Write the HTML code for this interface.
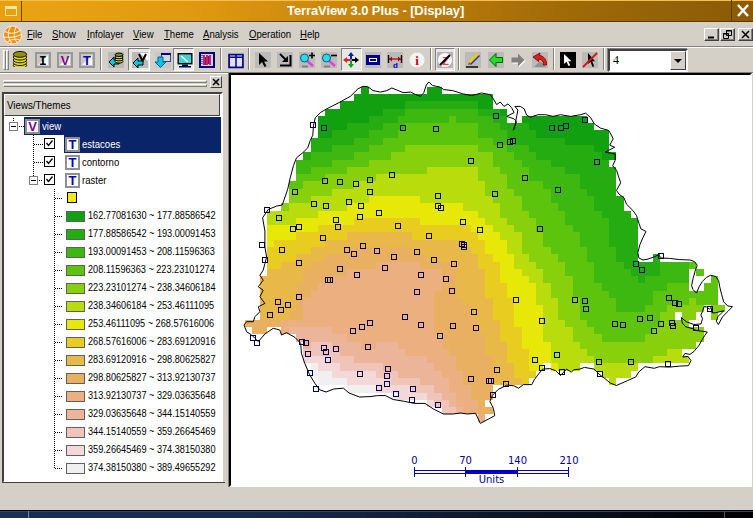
<!DOCTYPE html>
<html><head><meta charset="utf-8"><title>TerraView 3.0 Plus - [Display]</title>
<style>*{margin:0;padding:0;box-sizing:border-box}
html,body{width:753px;height:518px;overflow:hidden}
body{position:relative;background:#d4d0c8;font-family:"Liberation Sans",sans-serif;font-size:11px;color:#000}
#title{position:absolute;left:0;top:0;width:753px;height:22px;background:linear-gradient(90deg,#eaa412 0,#e09a10 25%,#c4820c 50%,#a06a08 75%,#8a5a06 100%);border-top:1px solid #f2c050;border-bottom:1px solid #5a3a00}
#tbtn{position:absolute;left:0;top:0;width:22px;height:20px;border-right:1px solid #6a4400;background:#e8a010}
#tbtn i{position:absolute;left:5px;top:5px;width:12px;height:10px;border:1px solid #ffe9a0;border-top-width:3px}
#ttext{position:absolute;left:287px;top:2px;white-space:nowrap;color:#fff;font-weight:bold;font-size:13px;line-height:16px;letter-spacing:-0.1px}
#tclose{position:absolute;left:731px;top:-1px;width:22px;height:21px;border-left:1px solid #5a3a00}
#menubar{position:absolute;left:0;top:22px;width:753px;height:52px}
.mi{position:absolute;top:5px;font-size:11px;line-height:14px;white-space:nowrap;transform-origin:0 0;transform:scaleX(.87)}
.mi u{text-decoration:underline}
.mb{position:absolute;top:6px;width:15px;height:13px;background:#d4d0c8;border:1px solid;border-color:#fff #404040 #404040 #fff;box-shadow:inset -1px -1px 0 #808080}
.sep{position:absolute;top:26px;width:2px;height:22px;border-left:1px solid #808080;border-right:1px solid #fff}
.tb{position:absolute;top:30px;width:16px;height:16px}
.prs{position:absolute;top:26px;height:23px;background:#e9e7e3;border:1px solid;border-color:#808080 #fff #fff #808080}
#combo{position:absolute;left:608px;top:27px;width:80px;height:23px;background:#fff;border:2px solid;border-color:#404040 #fff #fff #404040;box-shadow:-1px -1px 0 #808080}
#combo span{position:absolute;left:3px;top:2px;font-family:"Liberation Serif",serif;font-size:12px;line-height:15px}
#combo i{position:absolute;right:0;top:0;width:16px;height:19px;background:#d4d0c8;border:1px solid;border-color:#fff #404040 #404040 #fff}
#combo i:after{content:"";position:absolute;left:3px;top:7px;border:4px solid transparent;border-top:4px solid #000;border-bottom:0}
#dock{position:absolute;left:0;top:0;width:228px;height:487px}
.grip{position:absolute;left:3px;width:204px;height:3px;border:1px solid;border-color:#fff #808080 #808080 #fff}
#dclose{position:absolute;left:210px;top:76px;width:12px;height:12px;border:1px solid;border-color:#fff #404040 #404040 #fff;line-height:0}
#dclose svg{position:absolute;left:-1px;top:-1px}
#vthead{position:absolute;left:4px;top:94px;width:216px;height:22px;background:#d4d0c8;border:1px solid;border-color:#fff #404040 #404040 #fff}
#vthead span{position:absolute;left:2px;top:3px;font-size:11px;line-height:14px;white-space:nowrap;transform-origin:0 0;transform:scaleX(.885)}
#treebox{position:absolute;left:2px;top:92px;width:221px;height:391px;border:2px solid;border-color:#404040 #fff #fff #404040;background:#fff;z-index:-1}
#treebox .sel{position:absolute;height:18px;background:#0a246a;margin-top:23px}
#treeitems{position:absolute;left:0;top:0}
.tt{position:absolute;font-size:11px;line-height:14px;white-space:nowrap;transform-origin:0 0;transform:scaleX(.87)}
.tt.w{color:#fff}
.lt{position:absolute;left:88px;font-size:10px;line-height:14px;white-space:nowrap;transform-origin:0 0;transform:scaleX(.915)}
.sw{position:absolute;left:66px;width:19px;height:11px;border:1px solid #606060}
.ysq{position:absolute;width:10px;height:11px;background:#ffe800;border:1px solid #000}
.vd{position:absolute;width:1px;background:repeating-linear-gradient(180deg,#000 0,#000 1px,transparent 1px,transparent 2px)}
.hd{position:absolute;height:1px;background:repeating-linear-gradient(90deg,#000 0,#000 1px,transparent 1px,transparent 2px)}
.pm{position:absolute;width:9px;height:9px;border:1px solid #808080;background:#fff}
.pm i{position:absolute;left:1px;top:3px;width:5px;height:1px;background:#000}
.cb{position:absolute;width:11px;height:11px;border:1px solid #000;background:#fff;line-height:0}
.vicon,.ticon{position:absolute;width:15px;height:15px;background:#fff;border:2px solid #909090;text-align:center;line-height:11px}
.vicon b{color:#800090;font-size:13px;line-height:11px;font-weight:bold;display:block;margin-left:-2px;width:15px}
.ticon b{color:#0000c0;font-size:13px;line-height:11px;font-weight:bold;display:block;margin-left:-2px;width:15px}
#canvas{position:absolute;left:229px;top:73px;width:523px;height:414px;background:#fff;border:2px solid;border-color:#000 #fff #fff #000;overflow:hidden;box-shadow:-1px 0 0 #808080}
#task{position:absolute;left:0;top:510px;width:753px;height:8px;background:linear-gradient(90deg,#16305a 0,#14284c 40%,#0a1428 70%,#000 100%);border-top:1px solid #000;box-shadow:inset 0 1px 0 #2c4470}
#task i{position:absolute;left:28px;top:0;width:1px;height:8px;background:#7088b0}

.hl{position:absolute;left:0;width:753px;height:2px;border-top:1px solid #808080;border-bottom:1px solid #fff}
.th{position:absolute;top:28px;width:3px;height:20px;border:1px solid;border-color:#fff #808080 #808080 #fff}
#task b{position:absolute;left:724px;top:0;width:1px;height:8px;background:#505868}
#tbot{position:absolute;left:2px;top:482px;width:223px;height:1px;background:#404040}
</style></head><body>
<div id="title"><div id="tbtn"><i></i></div><div id="ttext">TerraView 3.0 Plus - [Display]</div><div id="tclose"><svg width="22" height="22" viewBox="0 0 22 22"><path d="M6 5 L16 16 M16 5 L6 16" stroke="#fff" stroke-width="2.4" fill="none"/></svg></div></div>
<div id="menubar">
<svg style="position:absolute;left:2px;top:3px" width="21" height="20" viewBox="0 0 21 20"><circle cx="10.5" cy="10" r="9" fill="#f68a12" stroke="#fff0c8" stroke-width="1"/><g fill="none" stroke="#fff0c8" stroke-width="1.1"><path d="M3 6.5 C7 9 14 9 18 5.5"/><path d="M2 12 C7 12.5 14 12.5 19 9.5"/><path d="M5.5 16.5 C9 14.5 14 14 17.5 14.5"/><path d="M8.5 1.5 C5 7 6 14 10 18.5"/><path d="M14 2 C11 8 12 14 15 17.5"/></g></svg>
<div class="mi" style="left:27px"><u>F</u>ile</div>
<div class="mi" style="left:52px"><u>S</u>how</div>
<div class="mi" style="left:87px"><u>I</u>nfolayer</div>
<div class="mi" style="left:133px"><u>V</u>iew</div>
<div class="mi" style="left:164px"><u>T</u>heme</div>
<div class="mi" style="left:203px"><u>A</u>nalysis</div>
<div class="mi" style="left:249px"><u>O</u>peration</div>
<div class="mi" style="left:300px"><u>H</u>elp</div>
<div class="mb" style="left:704px"><svg width="13" height="11"><path d="M3 8.5 H9" stroke="#000" stroke-width="2"/></svg></div>
<div class="mb" style="left:720px"><svg width="13" height="11"><path d="M5.5 1.5 H10.5 V6.5 H5.5 Z M2.5 4.5 H7.5 V9.5 H2.5 Z" stroke="#000" fill="#d4d0c8" stroke-width="1"/><path d="M5 2 H11 M2 5 H8" stroke="#000"/></svg></div>
<div class="mb" style="left:738px"><svg width="13" height="11"><path d="M3 2 L10 9 M10 2 L3 9" stroke="#000" stroke-width="1.5"/></svg></div>
<div class="hl" style="top:24px"></div><div class="hl" style="top:50px"></div><div class="th" style="left:3px"></div><div class="th" style="left:6px"></div>
<div class="sep" style="left:100px"></div><div class="sep" style="left:220px"></div><div class="sep" style="left:248px"></div><div class="sep" style="left:430px"></div><div class="sep" style="left:458px"></div><div class="sep" style="left:553px"></div><div class="sep" style="left:603px"></div>
<div class="prs" style="left:128px;width:22px"></div><div class="prs" style="left:173px;width:21px"></div><div class="prs" style="left:341px;width:21px"></div><div class="prs" style="left:435px;width:20px"></div>
<svg class="tb" style="left:12px;top:29px" width="17" height="18" viewBox="0 0 17 18"><ellipse cx="8.5" cy="16.2" rx="7.5" ry="3.3" fill="#e0d828" stroke="#000" stroke-width="1"/><ellipse cx="8.5" cy="13.100000000000001" rx="7.5" ry="3.3" fill="#e0d828" stroke="#000" stroke-width="1"/><ellipse cx="8.5" cy="10.0" rx="7.5" ry="3.3" fill="#e0d828" stroke="#000" stroke-width="1"/><ellipse cx="8.5" cy="6.9" rx="7.5" ry="3.3" fill="#e0d828" stroke="#000" stroke-width="1"/><ellipse cx="8.5" cy="3.8" rx="7.5" ry="3.3" fill="#909010" stroke="#000" stroke-width="1"/></svg>
<svg class="tb" style="left:35px;top:30px" width="16" height="16" viewBox="0 0 16 16"><rect x="1" y="1" width="14" height="14" fill="#c8c8c8" stroke="#989898" stroke-width="2"/><path d="M3 13 L13 3 L13 13 Z" fill="#fff"/><text x="8" y="13" font-family="Liberation Mono,monospace" font-weight="bold" font-size="13" fill="#000" text-anchor="middle">I</text></svg>
<svg class="tb" style="left:57px;top:30px" width="16" height="16" viewBox="0 0 16 16"><rect x="1" y="1" width="14" height="14" fill="#c8c8c8" stroke="#989898" stroke-width="2"/><path d="M3 13 L13 3 L13 13 Z" fill="#fff"/><text x="8" y="13" font-family="Liberation Sans,sans-serif" font-weight="bold" font-size="13" fill="#800090" text-anchor="middle">V</text></svg>
<svg class="tb" style="left:79px;top:30px" width="16" height="16" viewBox="0 0 16 16"><rect x="1" y="1" width="14" height="14" fill="#c8c8c8" stroke="#989898" stroke-width="2"/><path d="M3 13 L13 3 L13 13 Z" fill="#fff"/><text x="8" y="13" font-family="Liberation Sans,sans-serif" font-weight="bold" font-size="13" fill="#0000c8" text-anchor="middle">T</text></svg>
<svg class="tb" style="left:108px;top:30px" width="16" height="16" viewBox="0 0 16 16"><rect width="16" height="16" fill="#bababa"/><path d="M1 10 L6 5 V8 H11 V12 H6 V15 Z" fill="#00c8d8" stroke="#000" stroke-width="1"/><ellipse cx="11.0" cy="9.36" rx="4.0" ry="1.76" fill="#e0d828" stroke="#000" stroke-width="1"/><ellipse cx="11.0" cy="7.16" rx="4.0" ry="1.76" fill="#e0d828" stroke="#000" stroke-width="1"/><ellipse cx="11.0" cy="4.96" rx="4.0" ry="1.76" fill="#e0d828" stroke="#000" stroke-width="1"/><ellipse cx="11.0" cy="2.76" rx="4.0" ry="1.76" fill="#909010" stroke="#000" stroke-width="1"/></svg>
<svg class="tb" style="left:132px;top:30px" width="16" height="16" viewBox="0 0 16 16"><rect width="16" height="16" fill="#bababa"/><path d="M8 1 H16 V9 Z" fill="#fff"/><path d="M7 2 L10.5 9 L14 2" stroke="#000" stroke-width="2" fill="none"/><path d="M1 11 L6 6 V9 H11 V13 H6 V16 Z" fill="#00c8d8" stroke="#000" stroke-width="1"/></svg>
<svg class="tb" style="left:155px;top:30px" width="16" height="16" viewBox="0 0 16 16"><rect width="16" height="16" fill="#c8c8c8"/><rect x="6.5" y="1.5" width="9" height="8" fill="#d8d8d8" stroke="#404080"/><rect x="6" y="1" width="10" height="2" fill="#000080"/><path d="M3 5 H8 V10 H11 L5.5 15.5 L0 10 H3 Z" fill="#00c8d8" stroke="#0060a0" stroke-width="1"/></svg>
<svg class="tb" style="left:177px;top:30px" width="16" height="16" viewBox="0 0 16 16"><rect x="1.2" y="1.7" width="13.6" height="10" fill="#40d0d8" stroke="#000" stroke-width="1.4"/><path d="M4 4 L11 10" stroke="#fff" stroke-width="1.5"/><rect x="5" y="12.5" width="6" height="1.5" fill="#000"/><rect x="2" y="14" width="12" height="1.5" fill="#000080"/></svg>
<svg class="tb" style="left:199px;top:30px" width="16" height="16" viewBox="0 0 16 16"><rect x="1" y="1" width="14" height="14" fill="#d0d0e0" stroke="#000080" stroke-width="2"/><path d="M5 3 V13 M8 3 V13 M11 3 V13" stroke="#c00030" stroke-width="1.6"/><path d="M6.5 5 V13 M9.5 4 V12" stroke="#8000c0" stroke-width="1"/><path d="M3 3 V13" stroke="#000080" stroke-dasharray="1 1"/></svg>
<svg class="tb" style="left:228px;top:31px" width="15" height="15" viewBox="0 0 15 15"><rect x="1" y="1.5" width="13" height="12" fill="#e0e0f0" stroke="#000090" stroke-width="1.6"/><path d="M7.5 1 V14 M1 4 H14" stroke="#000090" stroke-width="1.4"/></svg>
<svg class="tb" style="left:255px;top:30px" width="16" height="16" viewBox="0 0 16 16"><rect width="16" height="16" fill="#bababa"/><path d="M4 1 L4 13 L7 10 L9.5 15 L11.5 14 L9 9.5 L13 9.5 Z" fill="#000"/></svg>
<svg class="tb" style="left:277px;top:30px" width="16" height="16" viewBox="0 0 16 16"><rect width="16" height="16" fill="#bababa"/><path d="M3 2 L10 9" stroke="#000" stroke-width="2"/><path d="M11 4 V10 H5 Z" fill="#000"/><path d="M3 13.5 H13.5 V3" stroke="#000" stroke-width="2" fill="none"/></svg>
<svg class="tb" style="left:299px;top:30px" width="16" height="16" viewBox="0 0 16 16"><rect width="16" height="16" fill="#bababa"/><path d="M7 8 L14 14" stroke="#e040e0" stroke-width="2.4"/><path d="M3 14.5 H9" stroke="#808080" stroke-width="2"/><circle cx="5.5" cy="6" r="4" fill="#30d8e8" stroke="#006080" stroke-width="1"/><path d="M10 3.5 H16 M13 0.5 V6.5" stroke="#000" stroke-width="1.6"/></svg>
<svg class="tb" style="left:321px;top:30px" width="16" height="16" viewBox="0 0 16 16"><rect width="16" height="16" fill="#bababa"/><path d="M7 8 L14 14" stroke="#e040e0" stroke-width="2.4"/><path d="M3 14.5 H9" stroke="#808080" stroke-width="2"/><circle cx="5.5" cy="6" r="4" fill="#30d8e8" stroke="#006080" stroke-width="1"/><path d="M10 3.5 H16" stroke="#000" stroke-width="1.6"/></svg>
<svg class="tb" style="left:343px;top:30px" width="16" height="16" viewBox="0 0 16 16"><path d="M8 0 L11 4 H9 V7 H7 V4 H5 Z" fill="#0020c0"/><path d="M8 16 L5 12 H7 V9 H9 V12 H11 Z" fill="#10a020"/><path d="M0 8 L4 5 V7 H7 V9 H4 V11 Z" fill="#e02020"/><path d="M16 8 L12 11 V9 H9 V7 H12 V5 Z" fill="#000"/><rect x="7" y="7" width="2" height="2" fill="#808080"/></svg>
<svg class="tb" style="left:365px;top:30px" width="16" height="16" viewBox="0 0 16 16"><rect width="16" height="16" fill="#bababa"/><rect x="1" y="3" width="14" height="10" fill="#000090"/><rect x="4.5" y="6.5" width="7" height="3" fill="none" stroke="#fff" stroke-width="1"/></svg>
<svg class="tb" style="left:387px;top:30px" width="16" height="16" viewBox="0 0 16 16"><rect width="16" height="16" fill="#bababa"/><path d="M1.5 3 V11 M14.5 3 V11" stroke="#000" stroke-width="1.4"/><path d="M2 7 H14" stroke="#b00000" stroke-width="1.2"/><path d="M2 7 L5 4.5 V9.5 Z M14 7 L11 4.5 V9.5 Z" fill="#b00000"/><text x="6" y="15.5" font-size="8" font-weight="bold" fill="#0000d0" font-family="Liberation Sans,sans-serif">d</text></svg>
<svg class="tb" style="left:409px;top:30px" width="16" height="16" viewBox="0 0 16 16"><circle cx="8" cy="8" r="7.6" fill="#f4f4f4"/><text x="8" y="13" font-size="13" font-weight="bold" fill="#d00000" text-anchor="middle" font-family="Liberation Serif,serif">i</text></svg>
<svg class="tb" style="left:437px;top:30px" width="16" height="16" viewBox="0 0 16 16"><rect width="16" height="16" fill="#b4b4b4"/><circle cx="8" cy="8" r="7" fill="#f8f8f8"/><text x="8.5" y="12.5" font-size="11" font-weight="bold" fill="#e04040" text-anchor="middle" font-family="Liberation Sans,sans-serif">Z</text><path d="M3 13 L13 3" stroke="#000" stroke-width="2"/></svg>
<svg class="tb" style="left:465px;top:30px" width="16" height="16" viewBox="0 0 16 16"><rect width="16" height="16" fill="#bababa"/><path d="M4 11 L13 2" stroke="#e8d000" stroke-width="3"/><path d="M5.5 12.5 L14.5 3.5" stroke="#2030c0" stroke-width="1.4"/><path d="M3 13 L4 10 L6 12 Z" fill="#c04020"/><path d="M1 15 H13" stroke="#000" stroke-width="1.4"/></svg>
<svg class="tb" style="left:488px;top:30px" width="16" height="16" viewBox="0 0 16 16"><rect width="16" height="16" fill="#bababa"/><path d="M1.5 8 L8 1.5 V5.5 H14.5 V10.5 H8 V14.5 Z" fill="#20e020" stroke="#006000" stroke-width="1"/></svg>
<svg class="tb" style="left:510px;top:30px" width="16" height="16" viewBox="0 0 16 16"><path d="M15.5 9 L9 2.5 V6.5 H2.5 V11.5 H9 V15.5 Z" fill="#fff"/><path d="M14.5 8 L8 1.5 V5.5 H1.5 V10.5 H8 V14.5 Z" fill="#808080"/></svg>
<svg class="tb" style="left:532px;top:30px" width="16" height="16" viewBox="0 0 16 16"><rect width="16" height="16" fill="#bababa"/><path d="M2 15 L8 9 L14 15 Z" fill="#909090"/><path d="M1 5 L8 1 L7.5 3.5 C12 4 15 8 14.5 13 L11.5 13 C11.5 9.5 10 7.5 7 7 L6.5 9.5 Z" fill="#e02020" stroke="#700000" stroke-width=".8"/></svg>
<svg class="tb" style="left:560px;top:30px" width="16" height="16" viewBox="0 0 16 16"><rect width="16" height="16" fill="#000"/><path d="M4 2 L4 12 L6.5 9.8 L8.5 14 L10.2 13.2 L8.2 9.2 L11.5 9.2 Z" fill="#fff"/></svg>
<svg class="tb" style="left:582px;top:30px" width="16" height="16" viewBox="0 0 16 16"><rect width="16" height="16" fill="#bababa"/><path d="M6 1 L6 12 L8.5 9.8 L10.5 15 L12.2 14.2 L10.2 9.2 L13 9.2 Z" fill="#000"/><path d="M1 15 L15 1" stroke="#e01010" stroke-width="1.8"/></svg>
<div id="combo"><span>4</span><i></i></div>

</div>
<div id="dock">
 <div class="grip" style="top:80px"></div><div class="grip" style="top:84px"></div>
 <div id="dclose"><svg width="12" height="12" viewBox="0 0 12 12"><path d="M3 3 L9 9 M9 3 L3 9" stroke="#000" stroke-width="1.6"/></svg></div>
 <div id="vthead"><span>Views/Themes</span></div>
 <div id="treebox">
  <div class="sel" style="left:20px;top:0;width:197px"></div>
  <div class="sel" style="left:60px;top:18px;width:157px"></div>
 </div>
 <div id="treeitems">
  <div class="vd" style="left:13px;top:118px;height:4px"></div>
  <div class="pm" style="left:9px;top:122px"><i></i></div>
  <div class="hd" style="left:19px;top:126px;width:5px"></div>
  <div class="vicon" style="left:25px;top:119px"><b>V</b></div>
  <div class="tt w" style="left:42px;top:119px">view</div>
  <div class="vd" style="left:33px;top:135px;height:41px"></div>
  <div class="hd" style="left:34px;top:144px;width:9px"></div>
  <div class="hd" style="left:34px;top:162px;width:9px"></div>
  <div class="pm" style="left:29px;top:176px"><i></i></div>
  <div class="hd" style="left:39px;top:180px;width:4px"></div>
  <div class="cb" style="left:44px;top:138px"><svg width="9" height="9" viewBox="0 0 9 9"><path d="M1.5 4 L3.5 6.5 L7.5 1.5" stroke="#000" stroke-width="1.3" fill="none"/></svg></div>
  <div class="cb" style="left:44px;top:156px"><svg width="9" height="9" viewBox="0 0 9 9"><path d="M1.5 4 L3.5 6.5 L7.5 1.5" stroke="#000" stroke-width="1.3" fill="none"/></svg></div>
  <div class="cb" style="left:44px;top:174px"><svg width="9" height="9" viewBox="0 0 9 9"><path d="M1.5 4 L3.5 6.5 L7.5 1.5" stroke="#000" stroke-width="1.3" fill="none"/></svg></div>
  <div class="ticon" style="left:65px;top:137px"><b>T</b></div>
  <div class="ticon" style="left:65px;top:155px"><b>T</b></div>
  <div class="ticon" style="left:65px;top:173px"><b>T</b></div>
  <div class="tt w" style="left:82px;top:137px">estacoes</div>
  <div class="tt" style="left:82px;top:155px">contorno</div>
  <div class="tt" style="left:82px;top:173px">raster</div>
  <div class="vd" style="left:54px;top:189px;height:280px"></div>
  <div class="hd" style="left:55px;top:198px;width:7px"></div>
  <div class="ysq" style="left:67px;top:192px"></div>
  <div class="sw" style="top:211px;background:#10a010"></div><div class="lt" style="top:209px">162.77081630 ~ 177.88586542</div><div class="hd" style="left:55px;top:216px;width:7px"></div><div class="sw" style="top:229px;background:#24ac10"></div><div class="lt" style="top:227px">177.88586542 ~ 193.00091453</div><div class="hd" style="left:55px;top:234px;width:7px"></div><div class="sw" style="top:247px;background:#3cb810"></div><div class="lt" style="top:245px">193.00091453 ~ 208.11596363</div><div class="hd" style="left:55px;top:252px;width:7px"></div><div class="sw" style="top:265px;background:#5cc40c"></div><div class="lt" style="top:263px">208.11596363 ~ 223.23101274</div><div class="hd" style="left:55px;top:270px;width:7px"></div><div class="sw" style="top:283px;background:#88d00c"></div><div class="lt" style="top:281px">223.23101274 ~ 238.34606184</div><div class="hd" style="left:55px;top:288px;width:7px"></div><div class="sw" style="top:301px;background:#b8dc0c"></div><div class="lt" style="top:299px">238.34606184 ~ 253.46111095</div><div class="hd" style="left:55px;top:306px;width:7px"></div><div class="sw" style="top:319px;background:#e8e808"></div><div class="lt" style="top:317px">253.46111095 ~ 268.57616006</div><div class="hd" style="left:55px;top:324px;width:7px"></div><div class="sw" style="top:337px;background:#e8cc20"></div><div class="lt" style="top:335px">268.57616006 ~ 283.69120916</div><div class="hd" style="left:55px;top:342px;width:7px"></div><div class="sw" style="top:355px;background:#e8b848"></div><div class="lt" style="top:353px">283.69120916 ~ 298.80625827</div><div class="hd" style="left:55px;top:360px;width:7px"></div><div class="sw" style="top:373px;background:#e8b060"></div><div class="lt" style="top:371px">298.80625827 ~ 313.92130737</div><div class="hd" style="left:55px;top:378px;width:7px"></div><div class="sw" style="top:391px;background:#ecb080"></div><div class="lt" style="top:389px">313.92130737 ~ 329.03635648</div><div class="hd" style="left:55px;top:396px;width:7px"></div><div class="sw" style="top:409px;background:#ecb498"></div><div class="lt" style="top:407px">329.03635648 ~ 344.15140559</div><div class="hd" style="left:55px;top:414px;width:7px"></div><div class="sw" style="top:427px;background:#f0c4b8"></div><div class="lt" style="top:425px">344.15140559 ~ 359.26645469</div><div class="hd" style="left:55px;top:432px;width:7px"></div><div class="sw" style="top:445px;background:#f4d8d8"></div><div class="lt" style="top:443px">359.26645469 ~ 374.38150380</div><div class="hd" style="left:55px;top:450px;width:7px"></div><div class="sw" style="top:463px;background:#f0f0f0"></div><div class="lt" style="top:461px">374.38150380 ~ 389.49655292</div><div class="hd" style="left:55px;top:468px;width:7px"></div>
 </div>
</div>
<div id="canvas">
<svg width="520" height="411" viewBox="0 0 520 411" style="position:absolute;left:0;top:0"><g shape-rendering="crispEdges"><rect x="130" y="12" width="8" height="7" fill="#10a010"/><rect x="196" y="12" width="15" height="7" fill="#10a010"/><rect x="123" y="19" width="139" height="7" fill="#10a010"/><rect x="109" y="26" width="65" height="8" fill="#10a010"/><rect x="174" y="26" width="73" height="8" fill="#24ac10"/><rect x="247" y="26" width="15" height="8" fill="#10a010"/><rect x="94" y="34" width="58" height="7" fill="#10a010"/><rect x="152" y="34" width="22" height="7" fill="#24ac10"/><rect x="174" y="34" width="73" height="7" fill="#3cb810"/><rect x="247" y="34" width="22" height="7" fill="#24ac10"/><rect x="269" y="34" width="7" height="7" fill="#10a010"/><rect x="87" y="41" width="51" height="7" fill="#10a010"/><rect x="138" y="41" width="29" height="7" fill="#24ac10"/><rect x="167" y="41" width="51" height="7" fill="#3cb810"/><rect x="218" y="41" width="7" height="7" fill="#5cc40c"/><rect x="225" y="41" width="37" height="7" fill="#3cb810"/><rect x="262" y="41" width="14" height="7" fill="#24ac10"/><rect x="291" y="41" width="65" height="7" fill="#10a010"/><rect x="87" y="48" width="29" height="7" fill="#10a010"/><rect x="116" y="48" width="36" height="7" fill="#24ac10"/><rect x="152" y="48" width="22" height="7" fill="#3cb810"/><rect x="174" y="48" width="73" height="7" fill="#5cc40c"/><rect x="247" y="48" width="22" height="7" fill="#3cb810"/><rect x="269" y="48" width="29" height="7" fill="#24ac10"/><rect x="298" y="48" width="65" height="7" fill="#10a010"/><rect x="87" y="55" width="14" height="8" fill="#10a010"/><rect x="101" y="55" width="37" height="8" fill="#24ac10"/><rect x="138" y="55" width="29" height="8" fill="#3cb810"/><rect x="167" y="55" width="80" height="8" fill="#5cc40c"/><rect x="247" y="55" width="29" height="8" fill="#3cb810"/><rect x="276" y="55" width="29" height="8" fill="#24ac10"/><rect x="305" y="55" width="73" height="8" fill="#10a010"/><rect x="80" y="63" width="43" height="7" fill="#24ac10"/><rect x="123" y="63" width="29" height="7" fill="#3cb810"/><rect x="152" y="63" width="110" height="7" fill="#5cc40c"/><rect x="262" y="63" width="21" height="7" fill="#3cb810"/><rect x="283" y="63" width="51" height="7" fill="#24ac10"/><rect x="334" y="63" width="44" height="7" fill="#10a010"/><rect x="80" y="70" width="21" height="7" fill="#24ac10"/><rect x="101" y="70" width="37" height="7" fill="#3cb810"/><rect x="138" y="70" width="36" height="7" fill="#5cc40c"/><rect x="174" y="70" width="73" height="7" fill="#88d00c"/><rect x="247" y="70" width="29" height="7" fill="#5cc40c"/><rect x="276" y="70" width="22" height="7" fill="#3cb810"/><rect x="298" y="70" width="65" height="7" fill="#24ac10"/><rect x="363" y="70" width="15" height="7" fill="#10a010"/><rect x="72" y="77" width="8" height="8" fill="#24ac10"/><rect x="80" y="77" width="43" height="8" fill="#3cb810"/><rect x="123" y="77" width="37" height="8" fill="#5cc40c"/><rect x="160" y="77" width="102" height="8" fill="#88d00c"/><rect x="262" y="77" width="21" height="8" fill="#5cc40c"/><rect x="283" y="77" width="22" height="8" fill="#3cb810"/><rect x="305" y="77" width="66" height="8" fill="#24ac10"/><rect x="371" y="77" width="14" height="8" fill="#10a010"/><rect x="65" y="85" width="36" height="7" fill="#3cb810"/><rect x="101" y="85" width="37" height="7" fill="#5cc40c"/><rect x="138" y="85" width="124" height="7" fill="#88d00c"/><rect x="262" y="85" width="29" height="7" fill="#5cc40c"/><rect x="291" y="85" width="29" height="7" fill="#3cb810"/><rect x="320" y="85" width="58" height="7" fill="#24ac10"/><rect x="65" y="92" width="15" height="7" fill="#3cb810"/><rect x="80" y="92" width="36" height="7" fill="#5cc40c"/><rect x="116" y="92" width="80" height="7" fill="#88d00c"/><rect x="196" y="92" width="51" height="7" fill="#b8dc0c"/><rect x="247" y="92" width="22" height="7" fill="#88d00c"/><rect x="269" y="92" width="29" height="7" fill="#5cc40c"/><rect x="298" y="92" width="36" height="7" fill="#3cb810"/><rect x="334" y="92" width="51" height="7" fill="#24ac10"/><rect x="65" y="99" width="29" height="7" fill="#5cc40c"/><rect x="94" y="99" width="51" height="7" fill="#88d00c"/><rect x="145" y="99" width="102" height="7" fill="#b8dc0c"/><rect x="247" y="99" width="29" height="7" fill="#88d00c"/><rect x="276" y="99" width="22" height="7" fill="#5cc40c"/><rect x="298" y="99" width="51" height="7" fill="#3cb810"/><rect x="349" y="99" width="36" height="7" fill="#24ac10"/><rect x="58" y="106" width="14" height="8" fill="#5cc40c"/><rect x="72" y="106" width="51" height="8" fill="#88d00c"/><rect x="123" y="106" width="131" height="8" fill="#b8dc0c"/><rect x="254" y="106" width="22" height="8" fill="#88d00c"/><rect x="276" y="106" width="36" height="8" fill="#5cc40c"/><rect x="312" y="106" width="37" height="8" fill="#3cb810"/><rect x="349" y="106" width="36" height="8" fill="#24ac10"/><rect x="58" y="114" width="43" height="7" fill="#88d00c"/><rect x="101" y="114" width="153" height="7" fill="#b8dc0c"/><rect x="254" y="114" width="29" height="7" fill="#88d00c"/><rect x="283" y="114" width="37" height="7" fill="#5cc40c"/><rect x="320" y="114" width="36" height="7" fill="#3cb810"/><rect x="356" y="114" width="29" height="7" fill="#24ac10"/><rect x="58" y="121" width="22" height="7" fill="#88d00c"/><rect x="80" y="121" width="58" height="7" fill="#b8dc0c"/><rect x="138" y="121" width="51" height="7" fill="#e8e808"/><rect x="189" y="121" width="73" height="7" fill="#b8dc0c"/><rect x="262" y="121" width="29" height="7" fill="#88d00c"/><rect x="291" y="121" width="29" height="7" fill="#5cc40c"/><rect x="320" y="121" width="43" height="7" fill="#3cb810"/><rect x="363" y="121" width="30" height="7" fill="#24ac10"/><rect x="50" y="128" width="8" height="8" fill="#88d00c"/><rect x="58" y="128" width="58" height="8" fill="#b8dc0c"/><rect x="116" y="128" width="116" height="8" fill="#e8e808"/><rect x="232" y="128" width="37" height="8" fill="#b8dc0c"/><rect x="269" y="128" width="22" height="8" fill="#88d00c"/><rect x="291" y="128" width="36" height="8" fill="#5cc40c"/><rect x="327" y="128" width="36" height="8" fill="#3cb810"/><rect x="363" y="128" width="30" height="8" fill="#24ac10"/><rect x="36" y="136" width="51" height="7" fill="#b8dc0c"/><rect x="87" y="136" width="160" height="7" fill="#e8e808"/><rect x="247" y="136" width="22" height="7" fill="#b8dc0c"/><rect x="269" y="136" width="29" height="7" fill="#88d00c"/><rect x="298" y="136" width="36" height="7" fill="#5cc40c"/><rect x="334" y="136" width="37" height="7" fill="#3cb810"/><rect x="371" y="136" width="29" height="7" fill="#24ac10"/><rect x="36" y="143" width="29" height="7" fill="#b8dc0c"/><rect x="65" y="143" width="58" height="7" fill="#e8e808"/><rect x="123" y="143" width="66" height="7" fill="#e8cc20"/><rect x="189" y="143" width="65" height="7" fill="#e8e808"/><rect x="254" y="143" width="22" height="7" fill="#b8dc0c"/><rect x="276" y="143" width="29" height="7" fill="#88d00c"/><rect x="305" y="143" width="29" height="7" fill="#5cc40c"/><rect x="334" y="143" width="44" height="7" fill="#3cb810"/><rect x="378" y="143" width="29" height="7" fill="#24ac10"/><rect x="36" y="150" width="51" height="7" fill="#e8e808"/><rect x="87" y="150" width="153" height="7" fill="#e8cc20"/><rect x="240" y="150" width="22" height="7" fill="#e8e808"/><rect x="262" y="150" width="21" height="7" fill="#b8dc0c"/><rect x="283" y="150" width="22" height="7" fill="#88d00c"/><rect x="305" y="150" width="37" height="7" fill="#5cc40c"/><rect x="342" y="150" width="36" height="7" fill="#3cb810"/><rect x="378" y="150" width="29" height="7" fill="#24ac10"/><rect x="36" y="157" width="29" height="8" fill="#e8e808"/><rect x="65" y="157" width="51" height="8" fill="#e8cc20"/><rect x="116" y="157" width="65" height="8" fill="#e8b848"/><rect x="181" y="157" width="66" height="8" fill="#e8cc20"/><rect x="247" y="157" width="22" height="8" fill="#e8e808"/><rect x="269" y="157" width="22" height="8" fill="#b8dc0c"/><rect x="291" y="157" width="21" height="8" fill="#88d00c"/><rect x="312" y="157" width="37" height="8" fill="#5cc40c"/><rect x="349" y="157" width="29" height="8" fill="#3cb810"/><rect x="378" y="157" width="29" height="8" fill="#24ac10"/><rect x="36" y="165" width="7" height="7" fill="#e8e808"/><rect x="43" y="165" width="51" height="7" fill="#e8cc20"/><rect x="94" y="165" width="138" height="7" fill="#e8b848"/><rect x="232" y="165" width="22" height="7" fill="#e8cc20"/><rect x="254" y="165" width="22" height="7" fill="#e8e808"/><rect x="276" y="165" width="15" height="7" fill="#b8dc0c"/><rect x="291" y="165" width="21" height="7" fill="#88d00c"/><rect x="312" y="165" width="37" height="7" fill="#5cc40c"/><rect x="349" y="165" width="29" height="7" fill="#3cb810"/><rect x="378" y="165" width="29" height="7" fill="#24ac10"/><rect x="36" y="172" width="44" height="7" fill="#e8cc20"/><rect x="80" y="172" width="36" height="7" fill="#e8b848"/><rect x="116" y="172" width="65" height="7" fill="#e8b060"/><rect x="181" y="172" width="59" height="7" fill="#e8b848"/><rect x="240" y="172" width="14" height="7" fill="#e8cc20"/><rect x="254" y="172" width="22" height="7" fill="#e8e808"/><rect x="276" y="172" width="15" height="7" fill="#b8dc0c"/><rect x="291" y="172" width="29" height="7" fill="#88d00c"/><rect x="320" y="172" width="36" height="7" fill="#5cc40c"/><rect x="356" y="172" width="29" height="7" fill="#3cb810"/><rect x="385" y="172" width="22" height="7" fill="#24ac10"/><rect x="36" y="179" width="29" height="8" fill="#e8cc20"/><rect x="65" y="179" width="29" height="8" fill="#e8b848"/><rect x="94" y="179" width="102" height="8" fill="#e8b060"/><rect x="196" y="179" width="51" height="8" fill="#e8b848"/><rect x="247" y="179" width="15" height="8" fill="#e8cc20"/><rect x="262" y="179" width="21" height="8" fill="#e8e808"/><rect x="283" y="179" width="15" height="8" fill="#b8dc0c"/><rect x="298" y="179" width="29" height="8" fill="#88d00c"/><rect x="327" y="179" width="29" height="8" fill="#5cc40c"/><rect x="356" y="179" width="29" height="8" fill="#3cb810"/><rect x="385" y="179" width="22" height="8" fill="#24ac10"/><rect x="422" y="179" width="7" height="8" fill="#24ac10"/><rect x="36" y="187" width="14" height="7" fill="#e8cc20"/><rect x="50" y="187" width="30" height="7" fill="#e8b848"/><rect x="80" y="187" width="65" height="7" fill="#e8b060"/><rect x="145" y="187" width="44" height="7" fill="#ecb080"/><rect x="189" y="187" width="36" height="7" fill="#e8b060"/><rect x="225" y="187" width="22" height="7" fill="#e8b848"/><rect x="247" y="187" width="22" height="7" fill="#e8cc20"/><rect x="269" y="187" width="14" height="7" fill="#e8e808"/><rect x="283" y="187" width="22" height="7" fill="#b8dc0c"/><rect x="305" y="187" width="29" height="7" fill="#88d00c"/><rect x="334" y="187" width="29" height="7" fill="#5cc40c"/><rect x="363" y="187" width="30" height="7" fill="#3cb810"/><rect x="393" y="187" width="36" height="7" fill="#24ac10"/><rect x="429" y="187" width="29" height="7" fill="#3cb810"/><rect x="458" y="187" width="7" height="7" fill="#5cc40c"/><rect x="36" y="194" width="36" height="7" fill="#e8b848"/><rect x="72" y="194" width="44" height="7" fill="#e8b060"/><rect x="116" y="194" width="95" height="7" fill="#ecb080"/><rect x="211" y="194" width="14" height="7" fill="#e8b060"/><rect x="225" y="194" width="29" height="7" fill="#e8b848"/><rect x="254" y="194" width="15" height="7" fill="#e8cc20"/><rect x="269" y="194" width="22" height="7" fill="#e8e808"/><rect x="291" y="194" width="21" height="7" fill="#b8dc0c"/><rect x="312" y="194" width="22" height="7" fill="#88d00c"/><rect x="334" y="194" width="29" height="7" fill="#5cc40c"/><rect x="363" y="194" width="37" height="7" fill="#3cb810"/><rect x="400" y="194" width="29" height="7" fill="#24ac10"/><rect x="429" y="194" width="29" height="7" fill="#3cb810"/><rect x="465" y="194" width="8" height="7" fill="#5cc40c"/><rect x="29" y="201" width="43" height="7" fill="#e8b848"/><rect x="72" y="201" width="22" height="7" fill="#e8b060"/><rect x="94" y="201" width="117" height="7" fill="#ecb080"/><rect x="211" y="201" width="14" height="7" fill="#e8b060"/><rect x="225" y="201" width="29" height="7" fill="#e8b848"/><rect x="254" y="201" width="15" height="7" fill="#e8cc20"/><rect x="269" y="201" width="29" height="7" fill="#e8e808"/><rect x="298" y="201" width="14" height="7" fill="#b8dc0c"/><rect x="312" y="201" width="30" height="7" fill="#88d00c"/><rect x="342" y="201" width="21" height="7" fill="#5cc40c"/><rect x="363" y="201" width="44" height="7" fill="#3cb810"/><rect x="407" y="201" width="7" height="7" fill="#24ac10"/><rect x="414" y="201" width="44" height="7" fill="#3cb810"/><rect x="480" y="201" width="7" height="7" fill="#5cc40c"/><rect x="29" y="208" width="36" height="8" fill="#e8b848"/><rect x="65" y="208" width="22" height="8" fill="#e8b060"/><rect x="87" y="208" width="124" height="8" fill="#ecb080"/><rect x="211" y="208" width="14" height="8" fill="#e8b060"/><rect x="225" y="208" width="29" height="8" fill="#e8b848"/><rect x="254" y="208" width="22" height="8" fill="#e8cc20"/><rect x="276" y="208" width="29" height="8" fill="#e8e808"/><rect x="305" y="208" width="15" height="8" fill="#b8dc0c"/><rect x="320" y="208" width="22" height="8" fill="#88d00c"/><rect x="342" y="208" width="29" height="8" fill="#5cc40c"/><rect x="371" y="208" width="65" height="8" fill="#3cb810"/><rect x="436" y="208" width="22" height="8" fill="#5cc40c"/><rect x="473" y="208" width="14" height="8" fill="#5cc40c"/><rect x="29" y="216" width="36" height="7" fill="#e8b848"/><rect x="65" y="216" width="15" height="7" fill="#e8b060"/><rect x="80" y="216" width="123" height="7" fill="#ecb080"/><rect x="203" y="216" width="22" height="7" fill="#e8b060"/><rect x="225" y="216" width="29" height="7" fill="#e8b848"/><rect x="254" y="216" width="22" height="7" fill="#e8cc20"/><rect x="276" y="216" width="29" height="7" fill="#e8e808"/><rect x="305" y="216" width="15" height="7" fill="#b8dc0c"/><rect x="320" y="216" width="22" height="7" fill="#88d00c"/><rect x="342" y="216" width="36" height="7" fill="#5cc40c"/><rect x="378" y="216" width="44" height="7" fill="#3cb810"/><rect x="422" y="216" width="65" height="7" fill="#5cc40c"/><rect x="29" y="223" width="36" height="7" fill="#e8b848"/><rect x="65" y="223" width="7" height="7" fill="#e8b060"/><rect x="72" y="223" width="131" height="7" fill="#ecb080"/><rect x="203" y="223" width="29" height="7" fill="#e8b060"/><rect x="232" y="223" width="30" height="7" fill="#e8b848"/><rect x="262" y="223" width="21" height="7" fill="#e8cc20"/><rect x="283" y="223" width="22" height="7" fill="#e8e808"/><rect x="305" y="223" width="22" height="7" fill="#b8dc0c"/><rect x="327" y="223" width="22" height="7" fill="#88d00c"/><rect x="349" y="223" width="36" height="7" fill="#5cc40c"/><rect x="385" y="223" width="37" height="7" fill="#3cb810"/><rect x="422" y="223" width="36" height="7" fill="#5cc40c"/><rect x="458" y="223" width="7" height="7" fill="#88d00c"/><rect x="465" y="223" width="22" height="7" fill="#5cc40c"/><rect x="29" y="230" width="36" height="7" fill="#e8b848"/><rect x="65" y="230" width="7" height="7" fill="#e8b060"/><rect x="72" y="230" width="131" height="7" fill="#ecb080"/><rect x="203" y="230" width="37" height="7" fill="#e8b060"/><rect x="240" y="230" width="22" height="7" fill="#e8b848"/><rect x="262" y="230" width="21" height="7" fill="#e8cc20"/><rect x="283" y="230" width="29" height="7" fill="#e8e808"/><rect x="312" y="230" width="15" height="7" fill="#b8dc0c"/><rect x="327" y="230" width="22" height="7" fill="#88d00c"/><rect x="349" y="230" width="36" height="7" fill="#5cc40c"/><rect x="385" y="230" width="29" height="7" fill="#3cb810"/><rect x="414" y="230" width="22" height="7" fill="#5cc40c"/><rect x="436" y="230" width="37" height="7" fill="#88d00c"/><rect x="480" y="230" width="14" height="7" fill="#88d00c"/><rect x="29" y="237" width="29" height="8" fill="#e8b848"/><rect x="58" y="237" width="14" height="8" fill="#e8b060"/><rect x="72" y="237" width="131" height="8" fill="#ecb080"/><rect x="203" y="237" width="37" height="8" fill="#e8b060"/><rect x="240" y="237" width="22" height="8" fill="#e8b848"/><rect x="262" y="237" width="21" height="8" fill="#e8cc20"/><rect x="283" y="237" width="29" height="8" fill="#e8e808"/><rect x="312" y="237" width="15" height="8" fill="#b8dc0c"/><rect x="327" y="237" width="22" height="8" fill="#88d00c"/><rect x="349" y="237" width="80" height="8" fill="#5cc40c"/><rect x="429" y="237" width="15" height="8" fill="#88d00c"/><rect x="451" y="237" width="14" height="8" fill="#88d00c"/><rect x="480" y="237" width="7" height="8" fill="#88d00c"/><rect x="14" y="245" width="36" height="7" fill="#e8b060"/><rect x="50" y="245" width="153" height="7" fill="#ecb080"/><rect x="203" y="245" width="44" height="7" fill="#e8b060"/><rect x="247" y="245" width="22" height="7" fill="#e8b848"/><rect x="269" y="245" width="14" height="7" fill="#e8cc20"/><rect x="283" y="245" width="29" height="7" fill="#e8e808"/><rect x="312" y="245" width="22" height="7" fill="#b8dc0c"/><rect x="334" y="245" width="22" height="7" fill="#88d00c"/><rect x="356" y="245" width="73" height="7" fill="#5cc40c"/><rect x="429" y="245" width="29" height="7" fill="#88d00c"/><rect x="21" y="252" width="15" height="7" fill="#e8b060"/><rect x="50" y="252" width="8" height="7" fill="#ecb080"/><rect x="58" y="252" width="43" height="7" fill="#ecb498"/><rect x="101" y="252" width="102" height="7" fill="#ecb080"/><rect x="203" y="252" width="44" height="7" fill="#e8b060"/><rect x="247" y="252" width="22" height="7" fill="#e8b848"/><rect x="269" y="252" width="22" height="7" fill="#e8cc20"/><rect x="291" y="252" width="21" height="7" fill="#e8e808"/><rect x="312" y="252" width="30" height="7" fill="#b8dc0c"/><rect x="342" y="252" width="21" height="7" fill="#88d00c"/><rect x="363" y="252" width="59" height="7" fill="#5cc40c"/><rect x="422" y="252" width="51" height="7" fill="#88d00c"/><rect x="65" y="259" width="51" height="8" fill="#ecb498"/><rect x="116" y="259" width="95" height="8" fill="#ecb080"/><rect x="211" y="259" width="43" height="8" fill="#e8b060"/><rect x="254" y="259" width="15" height="8" fill="#e8b848"/><rect x="269" y="259" width="22" height="8" fill="#e8cc20"/><rect x="291" y="259" width="21" height="8" fill="#e8e808"/><rect x="312" y="259" width="30" height="8" fill="#b8dc0c"/><rect x="342" y="259" width="29" height="8" fill="#88d00c"/><rect x="371" y="259" width="43" height="8" fill="#5cc40c"/><rect x="414" y="259" width="59" height="8" fill="#88d00c"/><rect x="72" y="267" width="8" height="7" fill="#ecb498"/><rect x="80" y="267" width="21" height="7" fill="#f0c4b8"/><rect x="101" y="267" width="29" height="7" fill="#ecb498"/><rect x="130" y="267" width="15" height="7" fill="#ecb080"/><rect x="145" y="267" width="22" height="7" fill="#ecb498"/><rect x="167" y="267" width="44" height="7" fill="#ecb080"/><rect x="211" y="267" width="43" height="7" fill="#e8b060"/><rect x="254" y="267" width="22" height="7" fill="#e8b848"/><rect x="276" y="267" width="15" height="7" fill="#e8cc20"/><rect x="291" y="267" width="29" height="7" fill="#e8e808"/><rect x="320" y="267" width="29" height="7" fill="#b8dc0c"/><rect x="349" y="267" width="116" height="7" fill="#88d00c"/><rect x="72" y="274" width="37" height="7" fill="#f0c4b8"/><rect x="109" y="274" width="65" height="7" fill="#ecb498"/><rect x="174" y="274" width="44" height="7" fill="#ecb080"/><rect x="218" y="274" width="36" height="7" fill="#e8b060"/><rect x="254" y="274" width="22" height="7" fill="#e8b848"/><rect x="276" y="274" width="22" height="7" fill="#e8cc20"/><rect x="298" y="274" width="22" height="7" fill="#e8e808"/><rect x="320" y="274" width="36" height="7" fill="#b8dc0c"/><rect x="356" y="274" width="80" height="7" fill="#88d00c"/><rect x="436" y="274" width="15" height="7" fill="#b8dc0c"/><rect x="72" y="281" width="29" height="7" fill="#f4d8d8"/><rect x="101" y="281" width="22" height="7" fill="#f0c4b8"/><rect x="123" y="281" width="73" height="7" fill="#ecb498"/><rect x="196" y="281" width="29" height="7" fill="#ecb080"/><rect x="225" y="281" width="37" height="7" fill="#e8b060"/><rect x="262" y="281" width="14" height="7" fill="#e8b848"/><rect x="276" y="281" width="22" height="7" fill="#e8cc20"/><rect x="298" y="281" width="22" height="7" fill="#e8e808"/><rect x="320" y="281" width="43" height="7" fill="#b8dc0c"/><rect x="363" y="281" width="59" height="7" fill="#88d00c"/><rect x="422" y="281" width="36" height="7" fill="#b8dc0c"/><rect x="80" y="288" width="7" height="8" fill="#f0f0f0"/><rect x="87" y="288" width="22" height="8" fill="#f4d8d8"/><rect x="109" y="288" width="43" height="8" fill="#f0c4b8"/><rect x="152" y="288" width="51" height="8" fill="#ecb498"/><rect x="203" y="288" width="22" height="8" fill="#ecb080"/><rect x="225" y="288" width="37" height="8" fill="#e8b060"/><rect x="262" y="288" width="21" height="8" fill="#e8b848"/><rect x="283" y="288" width="15" height="8" fill="#e8cc20"/><rect x="298" y="288" width="14" height="8" fill="#e8e808"/><rect x="320" y="288" width="7" height="8" fill="#e8e808"/><rect x="327" y="288" width="22" height="8" fill="#b8dc0c"/><rect x="363" y="288" width="44" height="8" fill="#b8dc0c"/><rect x="80" y="296" width="21" height="7" fill="#f0f0f0"/><rect x="101" y="296" width="44" height="7" fill="#f4d8d8"/><rect x="145" y="296" width="22" height="7" fill="#f0c4b8"/><rect x="167" y="296" width="44" height="7" fill="#ecb498"/><rect x="211" y="296" width="21" height="7" fill="#ecb080"/><rect x="232" y="296" width="30" height="7" fill="#e8b060"/><rect x="262" y="296" width="21" height="7" fill="#e8b848"/><rect x="283" y="296" width="22" height="7" fill="#e8cc20"/><rect x="371" y="296" width="29" height="7" fill="#b8dc0c"/><rect x="87" y="303" width="29" height="7" fill="#f0f0f0"/><rect x="116" y="303" width="44" height="7" fill="#f4d8d8"/><rect x="160" y="303" width="29" height="7" fill="#f0c4b8"/><rect x="189" y="303" width="29" height="7" fill="#ecb498"/><rect x="218" y="303" width="14" height="7" fill="#ecb080"/><rect x="232" y="303" width="30" height="7" fill="#e8b060"/><rect x="262" y="303" width="29" height="7" fill="#e8b848"/><rect x="291" y="303" width="7" height="7" fill="#e8cc20"/><rect x="378" y="303" width="7" height="7" fill="#b8dc0c"/><rect x="116" y="310" width="29" height="8" fill="#f0f0f0"/><rect x="145" y="310" width="36" height="8" fill="#f4d8d8"/><rect x="181" y="310" width="22" height="8" fill="#f0c4b8"/><rect x="203" y="310" width="15" height="8" fill="#ecb498"/><rect x="218" y="310" width="22" height="8" fill="#ecb080"/><rect x="240" y="310" width="22" height="8" fill="#e8b060"/><rect x="160" y="318" width="7" height="7" fill="#f0f0f0"/><rect x="167" y="318" width="29" height="7" fill="#f4d8d8"/><rect x="196" y="318" width="15" height="7" fill="#f0c4b8"/><rect x="211" y="318" width="14" height="7" fill="#ecb498"/><rect x="225" y="318" width="15" height="7" fill="#ecb080"/><rect x="240" y="318" width="22" height="7" fill="#e8b060"/><rect x="196" y="325" width="7" height="7" fill="#f4d8d8"/><rect x="203" y="325" width="15" height="7" fill="#f0c4b8"/><rect x="218" y="325" width="7" height="7" fill="#ecb498"/><rect x="225" y="325" width="22" height="7" fill="#ecb080"/><rect x="247" y="325" width="7" height="7" fill="#e8b060"/><rect x="211" y="332" width="14" height="7" fill="#f0c4b8"/><rect x="225" y="332" width="7" height="7" fill="#ecb498"/><rect x="232" y="332" width="15" height="7" fill="#ecb080"/><rect x="247" y="332" width="15" height="7" fill="#e8b060"/><rect x="247" y="339" width="7" height="8" fill="#ecb080"/></g><polygon points="51.2,130.0 53.7,123.0 56.7,114.2 59.2,102.9 62.5,90.4 65.5,82.8 71.7,77.8 76.8,72.8 79.3,65.3 81.8,60.2 82.5,50.2 84.3,42.7 89.3,37.6 95.6,33.9 108.1,27.6 119.4,21.3 127.0,13.8 132.0,11.3 137.0,11.8 142.0,15.6 149.5,17.1 155.8,15.6 160.8,13.0 165.9,15.0 172.1,17.6 179.7,17.1 184.7,19.6 189.7,21.3 192.8,17.6 195.3,10.0 197.8,7.0 201.5,10.5 205.3,11.3 209.0,12.0 212.8,14.6 221.6,15.6 231.7,18.8 240.5,20.6 250.5,18.0 259.3,19.6 263.0,25.0 265.6,29.6 269.3,27.0 273.0,31.4 276.9,28.9 280.6,32.6 283.1,37.6 275.6,41.4 283.1,43.9 285.6,46.4 282.4,55.2 284.0,50.0 286.9,35.0 283.9,31.4 289.4,31.4 293.2,33.9 295.7,40.2 299.4,42.2 307.0,39.7 314.5,39.7 322.0,41.4 329.6,39.7 339.6,41.4 349.6,39.7 354.7,38.2 359.7,42.7 363.4,49.0 369.7,53.2 377.0,55.2 377.9,55.6 380.4,60.1 382.2,63.9 378.7,70.2 383.7,72.2 374.2,77.2 384.2,79.0 384.2,85.2 381.7,90.8 385.5,95.3 388.0,102.8 389.7,107.8 385.5,115.4 388.0,119.1 393.0,122.9 395.5,129.2 401.8,135.4 405.5,140.5 407.9,148.2 409.9,153.9 415.0,156.4 412.0,162.5 408.9,169.7 406.8,177.8 407.9,183.0 412.0,185.0 417.1,184.0 423.2,181.9 427.3,179.9 430.4,183.0 438.5,183.4 448.8,184.6 459.0,185.0 463.5,186.6 466.2,190.1 464.1,196.2 462.1,203.4 460.6,210.6 462.1,214.7 465.5,218.1 468.2,211.6 471.3,206.5 475.4,202.4 479.4,200.3 484.6,201.4 487.6,205.5 488.7,211.6 490.7,219.8 492.7,226.9 496.8,231.0 501.5,231.6 497.0,236.3 491.7,241.6 487.4,249.5 485.3,246.3 486.9,241.6 492.8,235.7 484.3,237.8 481.0,237.8 480.0,232.5 478.4,234.1 475.8,232.0 473.1,231.5 471.5,236.3 469.9,240.0 471.5,243.7 469.9,249.0 463.0,249.5 455.6,246.9 450.3,242.6 451.3,248.0 454.5,251.7 462.0,253.8 465.1,255.4 476.3,257.0 473.6,260.7 470.4,266.0 468.3,270.0 463.0,276.4 459.0,279.4 453.9,278.4 451.8,282.0 457.0,281.5 460.0,285.6 457.4,290.7 448.8,291.1 438.5,292.1 428.3,291.7 423.2,293.3 414.0,291.7 407.9,296.8 404.8,301.9 396.6,305.6 385.4,310.5 379.2,308.0 373.1,302.9 369.0,299.9 363.0,294.1 353.5,292.4 348.7,294.1 342.7,294.8 340.3,297.2 335.5,294.1 329.5,300.5 324.7,295.7 318.8,293.6 311.6,294.1 306.8,300.0 303.2,304.8 300.8,309.6 292.4,309.6 287.6,313.2 282.9,310.8 275.7,310.1 267.3,314.4 261.3,320.4 258.9,326.4 262.5,333.6 263.7,340.7 249.3,348.4 244.6,338.3 236.2,339.0 229.7,338.0 222.0,339.0 212.4,339.0 202.7,334.2 194.0,328.4 183.4,328.4 173.7,326.4 162.2,324.5 154.4,320.6 146.7,320.6 139.0,321.6 128.5,322.0 118.0,318.0 112.4,313.2 102.7,314.0 95.0,317.0 88.7,314.8 83.7,308.1 78.7,299.8 73.7,288.2 70.4,278.2 69.7,268.3 63.8,262.3 55.5,257.7 50.5,260.0 48.8,255.0 42.2,253.3 33.9,259.0 27.3,266.6 23.9,263.3 20.6,260.0 15.6,256.7 13.0,250.0 15.6,246.7 22.3,246.7 23.9,241.7 28.9,236.7 27.3,231.8 33.9,228.4 28.9,221.8 32.2,215.2 27.3,211.8 32.2,205.2 28.9,200.2 32.2,195.2 33.9,188.6 35.6,182.0 33.9,172.0 33.9,156.0 31.6,142.8 37.2,134.5 45.5,131.1" fill="none" stroke="#000" stroke-width="1"/><g fill="none" stroke="#000048" stroke-width="1" shape-rendering="crispEdges"><rect x="79.5" y="47.5" width="5" height="5"/><rect x="90.5" y="50.5" width="5" height="5"/><rect x="169.5" y="50.5" width="5" height="5"/><rect x="202.5" y="51.5" width="5" height="5"/><rect x="237.5" y="83.5" width="5" height="5"/><rect x="158.5" y="97.5" width="5" height="5"/><rect x="136.5" y="102.5" width="5" height="5"/><rect x="122.5" y="106.5" width="5" height="5"/><rect x="106.5" y="104.5" width="5" height="5"/><rect x="91.5" y="103.5" width="5" height="5"/><rect x="61.5" y="114.5" width="5" height="5"/><rect x="136.5" y="114.5" width="5" height="5"/><rect x="204.5" y="118.5" width="5" height="5"/><rect x="80.5" y="126.5" width="5" height="5"/><rect x="92.5" y="128.5" width="5" height="5"/><rect x="115.5" y="124.5" width="5" height="5"/><rect x="127.5" y="128.5" width="5" height="5"/><rect x="204.5" y="128.5" width="5" height="5"/><rect x="207.5" y="130.5" width="5" height="5"/><rect x="33.5" y="132.5" width="5" height="5"/><rect x="145.5" y="135.5" width="5" height="5"/><rect x="45.5" y="140.5" width="5" height="5"/><rect x="126.5" y="139.5" width="5" height="5"/><rect x="102.5" y="142.5" width="5" height="5"/><rect x="229.5" y="144.5" width="5" height="5"/><rect x="65.5" y="149.5" width="5" height="5"/><rect x="59.5" y="151.5" width="5" height="5"/><rect x="104.5" y="149.5" width="5" height="5"/><rect x="164.5" y="148.5" width="5" height="5"/><rect x="246.5" y="152.5" width="5" height="5"/><rect x="195.5" y="158.5" width="5" height="5"/><rect x="89.5" y="160.5" width="5" height="5"/><rect x="28.5" y="167.5" width="5" height="5"/><rect x="129.5" y="168.5" width="5" height="5"/><rect x="228.5" y="166.5" width="5" height="5"/><rect x="230.5" y="167.5" width="5" height="5"/><rect x="48.5" y="172.5" width="5" height="5"/><rect x="113.5" y="172.5" width="5" height="5"/><rect x="120.5" y="176.5" width="5" height="5"/><rect x="143.5" y="173.5" width="5" height="5"/><rect x="160.5" y="179.5" width="5" height="5"/><rect x="183.5" y="174.5" width="5" height="5"/><rect x="230.5" y="169.5" width="5" height="5"/><rect x="31.5" y="182.5" width="5" height="5"/><rect x="65.5" y="185.5" width="5" height="5"/><rect x="200.5" y="182.5" width="5" height="5"/><rect x="220.5" y="186.5" width="5" height="5"/><rect x="106.5" y="191.5" width="5" height="5"/><rect x="151.5" y="190.5" width="5" height="5"/><rect x="123.5" y="197.5" width="5" height="5"/><rect x="187.5" y="197.5" width="5" height="5"/><rect x="212.5" y="201.5" width="5" height="5"/><rect x="94.5" y="202.5" width="5" height="5"/><rect x="96.5" y="202.5" width="5" height="5"/><rect x="183.5" y="214.5" width="5" height="5"/><rect x="218.5" y="213.5" width="5" height="5"/><rect x="65.5" y="219.5" width="5" height="5"/><rect x="44.5" y="224.5" width="5" height="5"/><rect x="54.5" y="227.5" width="5" height="5"/><rect x="47.5" y="232.5" width="5" height="5"/><rect x="36.5" y="237.5" width="5" height="5"/><rect x="240.5" y="234.5" width="5" height="5"/><rect x="171.5" y="239.5" width="5" height="5"/><rect x="136.5" y="245.5" width="5" height="5"/><rect x="187.5" y="247.5" width="5" height="5"/><rect x="219.5" y="248.5" width="5" height="5"/><rect x="242.5" y="250.5" width="5" height="5"/><rect x="128.5" y="249.5" width="5" height="5"/><rect x="119.5" y="253.5" width="5" height="5"/><rect x="206.5" y="258.5" width="5" height="5"/><rect x="19.5" y="260.5" width="5" height="5"/><rect x="23.5" y="265.5" width="5" height="5"/><rect x="68.5" y="264.5" width="5" height="5"/><rect x="72.5" y="265.5" width="5" height="5"/><rect x="90.5" y="270.5" width="5" height="5"/><rect x="92.5" y="274.5" width="5" height="5"/><rect x="102.5" y="271.5" width="5" height="5"/><rect x="134.5" y="269.5" width="5" height="5"/><rect x="74.5" y="276.5" width="5" height="5"/><rect x="94.5" y="282.5" width="5" height="5"/><rect x="154.5" y="291.5" width="5" height="5"/><rect x="126.5" y="296.5" width="5" height="5"/><rect x="153.5" y="298.5" width="5" height="5"/><rect x="76.5" y="295.5" width="5" height="5"/><rect x="237.5" y="301.5" width="5" height="5"/><rect x="255.5" y="303.5" width="5" height="5"/><rect x="153.5" y="306.5" width="5" height="5"/><rect x="145.5" y="310.5" width="5" height="5"/><rect x="179.5" y="311.5" width="5" height="5"/><rect x="82.5" y="311.5" width="5" height="5"/><rect x="162.5" y="316.5" width="5" height="5"/><rect x="178.5" y="322.5" width="5" height="5"/><rect x="204.5" y="327.5" width="5" height="5"/><rect x="262.5" y="38.5" width="5" height="5"/><rect x="318.5" y="50.5" width="5" height="5"/><rect x="327.5" y="50.5" width="5" height="5"/><rect x="332.5" y="48.5" width="5" height="5"/><rect x="351.5" y="42.5" width="5" height="5"/><rect x="266.5" y="67.5" width="5" height="5"/><rect x="276.5" y="64.5" width="5" height="5"/><rect x="279.5" y="63.5" width="5" height="5"/><rect x="363.5" y="84.5" width="5" height="5"/><rect x="291.5" y="100.5" width="5" height="5"/><rect x="324.5" y="112.5" width="5" height="5"/><rect x="261.5" y="116.5" width="5" height="5"/><rect x="306.5" y="151.5" width="5" height="5"/><rect x="427.5" y="178.5" width="5" height="5"/><rect x="402.5" y="186.5" width="5" height="5"/><rect x="408.5" y="192.5" width="5" height="5"/><rect x="282.5" y="222.5" width="5" height="5"/><rect x="341.5" y="222.5" width="5" height="5"/><rect x="351.5" y="223.5" width="5" height="5"/><rect x="352.5" y="231.5" width="5" height="5"/><rect x="308.5" y="243.5" width="5" height="5"/><rect x="435.5" y="220.5" width="5" height="5"/><rect x="441.5" y="225.5" width="5" height="5"/><rect x="445.5" y="226.5" width="5" height="5"/><rect x="476.5" y="231.5" width="5" height="5"/><rect x="381.5" y="246.5" width="5" height="5"/><rect x="389.5" y="247.5" width="5" height="5"/><rect x="406.5" y="241.5" width="5" height="5"/><rect x="416.5" y="240.5" width="5" height="5"/><rect x="427.5" y="246.5" width="5" height="5"/><rect x="438.5" y="245.5" width="5" height="5"/><rect x="439.5" y="248.5" width="5" height="5"/><rect x="420.5" y="253.5" width="5" height="5"/><rect x="462.5" y="250.5" width="5" height="5"/><rect x="323.5" y="277.5" width="5" height="5"/><rect x="301.5" y="282.5" width="5" height="5"/><rect x="308.5" y="290.5" width="5" height="5"/><rect x="365.5" y="284.5" width="5" height="5"/><rect x="397.5" y="284.5" width="5" height="5"/><rect x="263.5" y="292.5" width="5" height="5"/><rect x="328.5" y="294.5" width="5" height="5"/><rect x="366.5" y="296.5" width="5" height="5"/><rect x="434.5" y="286.5" width="5" height="5"/><rect x="257.5" y="303.5" width="5" height="5"/><rect x="272.5" y="306.5" width="5" height="5"/><rect x="259.5" y="317.5" width="5" height="5"/></g>
<g stroke="#0000b0" stroke-width="1" fill="none" shape-rendering="crispEdges">
<path d="M183.5 392 V402 M234.5 392 V402 M286.5 392 V402 M337.5 392 V402 M183 395.5 H338 M183 398.5 H338"/>
<rect x="235" y="396" width="51" height="3" fill="#0000d0" stroke="none"/>
</g>
<g font-family="'DejaVu Sans','Liberation Sans',sans-serif" font-size="10" fill="#000090" text-anchor="middle">
<text x="183.5" y="389">0</text><text x="234.5" y="389">70</text><text x="286.5" y="389">140</text><text x="338" y="389">210</text><text x="260.5" y="408">Units</text>
</g>
</svg>
</div>
<div id="tbot"></div>
<div id="task"><i></i><b></b></div>
</body></html>
